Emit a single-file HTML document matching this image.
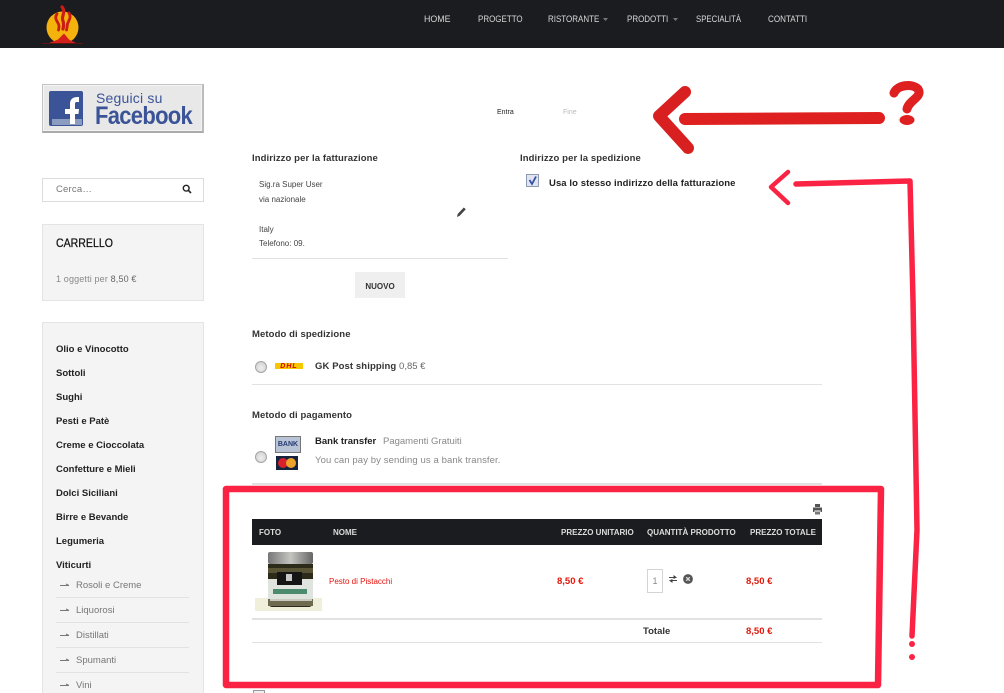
<!DOCTYPE html>
<html lang="it">
<head>
<meta charset="utf-8">
<title>Checkout</title>
<style>
html,body{margin:0;padding:0;background:#fff;width:1004px;height:693px;overflow:hidden}
#p{width:1004px;height:693px;overflow:hidden;position:relative;font-family:"Liberation Sans",Arial,sans-serif;color:#222}
.a{position:absolute;white-space:nowrap;line-height:12px}
.nav{top:13.500px;font-size:9.500px;color:#d8d8d8;transform-origin:0 50%}
.h{font-size:9.500px;font-weight:bold;letter-spacing:.1px;color:#333}
.addr{font-size:8px;color:#444;left:259px}
.m{left:56px;font-size:9.500px;font-weight:bold;color:#222}
.s{left:76px;font-size:9.500px;color:#777}
.ln{position:absolute;height:1px;background:#e2e2e2}
.th{top:527px;font-size:8px;font-weight:bold;color:#ddd}
.pr{font-size:9.500px;font-weight:bold;color:#e3170a}
.rad{width:10px;height:10px;border-radius:50%;border:1px solid #a5a5a5;background:radial-gradient(circle at 50% 60%,#eee,#ccc)}
</style>
</head>
<body>
<div id="p">
<div class="a" style="left:0;top:0;width:1004px;height:48px;background:#1b1c20"></div>

<svg class="a" style="left:40px;top:0" width="50" height="48" viewBox="0 0 50 48">
<circle cx="22.500" cy="27.500" r="16" fill="#f3b30c"/>
<path d="M2 43H43V44H2Z" fill="#5e1512"/>
<path d="M9 43L18 39.500 24 33.500 29 39.500 36 43Z" fill="#d4201a"/>
<g fill="none" stroke="#cb1d16" stroke-linecap="round">
<path d="M22 7C26 12 22 15 22.500 19 23 22 24.500 23 23 29" stroke-width="3.200"/>
<path d="M17 14C14 18 17 21 18.500 24 19.500 26 19 28 18.500 30" stroke-width="2.800"/>
<path d="M29 13C32 18 28 21 27.500 24 27 26 27 28 26.500 30" stroke-width="2.800"/>
</g>
</svg>

<div class="a nav" style="left:424px;transform:scaleX(.93)">HOME</div>
<div class="a nav" style="left:478px;transform:scaleX(.84)">PROGETTO</div>
<div class="a nav" style="left:548px;transform:scaleX(.84)">RISTORANTE</div>
<svg class="a" style="left:603px;top:18px" width="5" height="3"><path d="M0 0H5L2.500 3Z" fill="#777"/></svg>
<div class="a nav" style="left:627px;transform:scaleX(.84)">PRODOTTI</div>
<svg class="a" style="left:673px;top:18px" width="5" height="3"><path d="M0 0H5L2.500 3Z" fill="#777"/></svg>
<div class="a nav" style="left:696px;transform:scaleX(.82)">SPECIALITÀ</div>
<div class="a nav" style="left:768px;transform:scaleX(.85)">CONTATTI</div>

<!-- Facebook banner -->
<div class="a" style="left:42px;top:84px;width:159px;height:46px;background:#e8e8e8;border:1px solid #c4c4c4;border-bottom:2px solid #aaa;border-right:2px solid #bbb;box-shadow:inset 0 0 0 1px #f4f4f4"></div>
<div class="a" style="left:49px;top:91px;width:34px;height:35px;background:#3b5498;border-radius:2px;overflow:hidden">
  <div style="position:absolute;left:3px;right:1px;bottom:1px;height:6px;background:#8c9cc0"></div>
  <svg style="position:absolute;left:0;top:0" width="34" height="35"><path d="M21 33V23H16V18H21V13C21 8 24 6 29 6H30V11H28C26 11 26 12 26 14V18H30L29.500 23H26V33Z" fill="#fff"/></svg>
</div>
<div class="a" style="left:96px;top:90px;font-size:14px;line-height:17px;color:#3b5498;letter-spacing:.2px">Seguici su</div>
<div class="a" style="left:95px;top:103px;font-size:25px;line-height:27px;color:#3b5498;font-weight:bold;letter-spacing:-.8px;transform:scaleX(.88);transform-origin:0 50%">Facebook</div>

<!-- Search -->
<div class="a" style="left:42px;top:178px;width:160px;height:22px;border:1px solid #dcdcdc"></div>
<div class="a" style="left:56px;top:184px;font-size:9.500px;color:#777;letter-spacing:.2px">Cerca…</div>
<svg class="a" style="left:182px;top:184px" width="10" height="10" viewBox="0 0 10 10"><circle cx="4.200" cy="4.200" r="2.900" fill="none" stroke="#222" stroke-width="1.400"/><path d="M6.300 6.300L9 9" stroke="#222" stroke-width="1.600"/></svg>

<!-- Cart -->
<div class="a" style="left:42px;top:224px;width:160px;height:75px;background:#f4f4f4;border:1px solid #e4e4e4"></div>
<div class="a" style="left:56px;top:236px;font-size:12px;line-height:14px;color:#111;transform:scaleX(.88);transform-origin:0 50%;-webkit-text-stroke:.25px #111">CARRELLO</div>
<div class="a" style="left:56px;top:273px;font-size:9px;color:#888;letter-spacing:.15px">1 oggetti per <span style="color:#666">8,50 €</span></div>

<!-- Menu -->
<div class="a" style="left:42px;top:322px;width:160px;height:380px;background:#f4f4f4;border:1px solid #e4e4e4"></div>
<div class="a m" style="top:344px">Olio e Vinocotto</div>
<div class="a m" style="top:368px">Sottoli</div>
<div class="a m" style="top:392px">Sughi</div>
<div class="a m" style="top:416px">Pesti e Patè</div>
<div class="a m" style="top:440px">Creme e Cioccolata</div>
<div class="a m" style="top:464px">Confetture e Mieli</div>
<div class="a m" style="top:488px">Dolci Siciliani</div>
<div class="a m" style="top:512px">Birre e Bevande</div>
<div class="a m" style="top:536px">Legumeria</div>
<div class="a m" style="top:560px">Viticurti</div>
<svg class="a" style="left:60px;top:583px" width="10" height="105" viewBox="0 0 10 105">
<g fill="none" stroke="#777" stroke-width="1"><path d="M0 2.500H9M6 1L9 2.500"/><path d="M0 27.500H9M6 26L9 27.500"/><path d="M0 52.500H9M6 51L9 52.500"/><path d="M0 77.500H9M6 76L9 77.500"/><path d="M0 102.500H9M6 101L9 102.500"/></g>
</svg>
<div class="a s" style="top:580px">Rosoli e Creme</div>
<div class="ln" style="left:56px;top:597px;width:133px"></div>
<div class="a s" style="top:605px">Liquorosi</div>
<div class="ln" style="left:56px;top:622px;width:133px"></div>
<div class="a s" style="top:630px">Distillati</div>
<div class="ln" style="left:56px;top:647px;width:133px"></div>
<div class="a s" style="top:655px">Spumanti</div>
<div class="ln" style="left:56px;top:672px;width:133px"></div>
<div class="a s" style="top:680px">Vini</div>

<!-- Steps -->
<div class="a" style="left:497px;top:107px;font-size:7px;color:#222">Entra</div>
<div class="a" style="left:563px;top:107px;font-size:7px;color:#bbb">Fine</div>

<!-- Billing -->
<div class="a h" style="left:252px;top:153px">Indirizzo per la fatturazione</div>
<div class="a addr" style="top:179px">Sig.ra Super User</div>
<div class="a addr" style="top:194px">via nazionale</div>
<div class="a addr" style="top:224px">Italy</div>
<div class="a addr" style="top:238px">Telefono: 09.</div>
<svg class="a" style="left:455px;top:206px" width="12" height="12" viewBox="0 0 12 12"><path d="M2 11L2.700 8 8.800 1.500 10.800 3.300 4.700 9.800Z" fill="#444"/></svg>
<div class="ln" style="left:252px;top:258px;width:256px"></div>
<div class="a" style="left:355px;top:272px;width:50px;height:26px;background:#efefef;font-size:8px;line-height:29px;text-align:center;color:#333;font-weight:bold">NUOVO</div>

<!-- Shipping address -->
<div class="a h" style="left:520px;top:153px">Indirizzo per la spedizione</div>
<div class="a" style="left:526px;top:174px;width:11px;height:11px;border:1px solid #8f9bb3;background:#dfe4f0"></div>
<svg class="a" style="left:526px;top:174px" width="13" height="13"><path d="M3.500 6L6 10 10 2.500" fill="none" stroke="#3550a5" stroke-width="1.800"/></svg>
<div class="a" style="left:549px;top:178px;font-size:9.500px;font-weight:bold;letter-spacing:.08px;color:#222">Usa lo stesso indirizzo della fatturazione</div>

<!-- Shipping method -->
<div class="a h" style="left:252px;top:329px">Metodo di spedizione</div>
<div class="a rad" style="left:255px;top:361px"></div>
<div class="a" style="left:275px;top:363px;width:28px;height:6px;background:#f7c600"></div>
<div class="a" style="left:275px;top:364px;width:28px;text-align:center;font-size:7px;line-height:6px;font-weight:bold;font-style:italic;color:#d40511;letter-spacing:1px">DHL</div>
<div class="a" style="left:315px;top:361px;font-size:9.500px;font-weight:bold;color:#333;letter-spacing:.1px">GK Post shipping <span style="font-weight:normal;color:#666;font-size:9.500px;letter-spacing:0">0,85 €</span></div>
<div class="ln" style="left:252px;top:384px;width:570px"></div>

<!-- Payment -->
<div class="a h" style="left:252px;top:410px">Metodo di pagamento</div>
<div class="a rad" style="left:255px;top:451px"></div>
<div class="a" style="left:275px;top:436px;width:24px;height:15px;background:#b8c3d6;border:1px solid #777;font-size:7px;line-height:16px;font-weight:bold;color:#253a72;text-align:center">BANK</div>
<div class="a" style="left:276px;top:456px;width:22px;height:14px;background:#16233f"></div>
<div class="a" style="left:278px;top:458px;width:10px;height:10px;background:#d6202a;border-radius:50%"></div>
<div class="a" style="left:286px;top:458px;width:10px;height:10px;background:#eda32a;border-radius:50%"></div>
<div class="a" style="left:315px;top:436px;font-size:9.500px;font-weight:bold;color:#222">Bank transfer</div>
<div class="a" style="left:383px;top:436px;font-size:9.500px;color:#888">Pagamenti Gratuiti</div>
<div class="a" style="left:315px;top:455px;font-size:9.500px;color:#888;letter-spacing:.1px">You can pay by sending us a bank transfer.</div>
<div class="ln" style="left:252px;top:483px;width:570px;height:2px"></div>

<!-- Cart table -->
<svg class="a" style="left:812px;top:504px" width="11" height="11" viewBox="0 0 11 11"><path d="M3 0H8V3H3ZM1 3.500H10V8H8.500V6.500H2.500V8H1Z" fill="#555"/><path d="M3 7.500H8V10.500H3Z" fill="#777"/></svg>
<div class="a" style="left:252px;top:519px;width:570px;height:26px;background:#1b1c20"></div>
<div class="a th" style="left:259px">FOTO</div>
<div class="a th" style="left:333px">NOME</div>
<div class="a th" style="left:561px">PREZZO UNITARIO</div>
<div class="a th" style="left:647px">QUANTITÀ PRODOTTO</div>
<div class="a th" style="left:750px">PREZZO TOTALE</div>

<!-- Product image -->
<svg class="a" style="left:255px;top:552px" width="67" height="60" viewBox="0 0 67 60">
<defs><linearGradient id="c" x1="0" x2="1" y1="0" y2="0"><stop offset="0" stop-color="#777"/><stop offset=".5" stop-color="#c4c4c0"/><stop offset="1" stop-color="#666"/></linearGradient></defs>
<rect x="0" y="46" width="67" height="13" fill="#efefdc"/>
<path d="M13 12H58V50C58 53 56 55 54 55H17C15 55 13 53 13 50Z" fill="#2c2a18"/>
<rect x="13" y="0" width="45" height="12" rx="2" fill="url(#c)"/>
<rect x="13" y="16" width="45" height="5" fill="#5a5436"/>
<rect x="13" y="27" width="45" height="20" fill="#dfe5de"/>
<rect x="22" y="20" width="25" height="13" fill="#151515"/>
<rect x="31" y="22" width="6" height="7" fill="#c8c8c8"/>
<rect x="18" y="37" width="34" height="5" fill="#4d8b6e"/>
<rect x="13" y="47" width="45" height="7" fill="#6d6a4f"/>
<rect x="15" y="47" width="42" height="2" fill="#c9c9c0"/>
</svg>

<div class="a" style="left:329px;top:576px;font-size:8px;color:#e8120c">Pesto di Pistacchi</div>
<div class="a pr" style="left:557px;top:576px">8,50 €</div>
<div class="a" style="left:647px;top:569px;width:14px;height:22px;border:1px solid #d4d4d4;font-size:9px;line-height:22px;text-align:center;color:#888">1</div>
<svg class="a" style="left:668px;top:574px" width="10" height="10" viewBox="0 0 10 10"><path d="M1 4V3H5.500V1L9 3.500 5.500 5V4ZM9 6V7H4.500V9L1 6.500 4.500 5V6Z" fill="#444"/></svg>
<svg class="a" style="left:683px;top:574px" width="10" height="10" viewBox="0 0 10 10"><circle cx="5" cy="5" r="4.900" fill="#555"/><path d="M3.200 3.200L6.800 6.800M6.800 3.200L3.200 6.800" stroke="#ddd" stroke-width="1.300"/></svg>
<div class="a pr" style="left:746px;top:576px">8,50 €</div>
<div class="ln" style="left:252px;top:618px;width:570px;height:2px"></div>
<div class="a" style="left:643px;top:626px;font-size:9.500px;font-weight:bold;color:#333">Totale</div>
<div class="a pr" style="left:746px;top:626px">8,50 €</div>
<div class="ln" style="left:252px;top:642px;width:570px"></div>
<div class="a" style="left:253px;top:690px;width:10px;height:10px;border:1px solid #999;background:#eee"></div>

<!-- Annotations -->
<svg class="a" style="left:0;top:0;pointer-events:none" width="1004" height="693" viewBox="0 0 1004 693">
<g fill="none" stroke-linecap="round" stroke-linejoin="round">
<path d="M685 119L879 118" stroke="#df2020" stroke-width="12"/>
<path d="M685 92L659 116 688 148" stroke="#d92020" stroke-width="12"/>
<path d="M894 93C897 85 912 83 918 89 923 97 909 100 907 109" stroke="#df2020" stroke-width="9"/>
<path d="M226 489H881L878 685H226Z" stroke="#fb2343" stroke-width="6.500"/>
<path d="M796 184L910 181 913 300 917 530 912 636" stroke="#fb2343" stroke-width="5.500"/>
<path d="M788 172L771 187 788 203" stroke="#fb2343" stroke-width="4.500"/>
</g>
<ellipse cx="907" cy="120" rx="7.500" ry="5" fill="#df2020"/>
<circle cx="912" cy="644" r="3" fill="#fb2343"/>
<circle cx="912" cy="657" r="3" fill="#fb2343"/>
</svg>
</div>
</body>
</html>
